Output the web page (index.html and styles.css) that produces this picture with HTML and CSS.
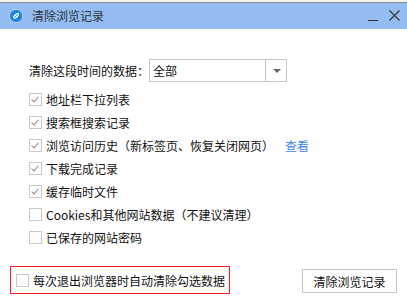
FILE: index.html
```html
<!DOCTYPE html>
<html lang="zh-CN">
<head>
<meta charset="UTF-8">
<title>清除浏览记录</title>
<link rel="stylesheet" href="styles.css">
</head>
<body>
<div class="window">
    <div class="topline"></div>
    <div class="titlebar">
        <svg class="logo" width="14" height="14" viewBox="0 0 14 14">
            <circle cx="7" cy="7" r="6.6" fill="#1c86e2"/>
            <circle cx="7" cy="7" r="6.6" fill="none" stroke="#e8f2fd" stroke-width="0.6"/>
            <path d="M4 10.2 C4 6.5 6 4 10 3.8 C10.2 7.5 8 10 4 10.2 Z" fill="#fff"/>
            <path d="M4.2 10 L9.2 4.8" stroke="#1c86e2" stroke-width="0.9"/>
        </svg>
        <span class="title">清除浏览记录</span>
        <div class="controls">
            <span class="min"></span>
            <svg class="close" width="11" height="11" viewBox="0 0 11 11">
                <path d="M0.5 0.5 L10.5 10.5 M10.5 0.5 L0.5 10.5" stroke="#333" stroke-width="1.1"/>
            </svg>
        </div>
    </div>
    <div class="content">
        <div class="range">
            <span class="label">清除这段时间的数据：</span>
            <div class="select">
                <span class="value">全部</span>
                <span class="arrow"></span>
            </div>
        </div>
        <ul class="options">
            <li><span class="box checked"></span>地址栏下拉列表</li>
            <li><span class="box checked"></span>搜索框搜索记录</li>
            <li><span class="box checked"></span>浏览访问历史（新标签页、恢复关闭网页）<a class="link">查看</a></li>
            <li><span class="box checked"></span>下载完成记录</li>
            <li><span class="box checked"></span>缓存临时文件</li>
            <li><span class="box"></span>Cookies和其他网站数据（不建议清理）</li>
            <li><span class="box"></span>已保存的网站密码</li>
        </ul>
    </div>
    <div class="footer">
        <div class="auto"><span class="box"></span>每次退出浏览器时自动清除勾选数据</div>
        <button class="clear-btn">清除浏览记录</button>
    </div>
</div>
</body>
</html>
```

FILE: styles.css
```css
body {
    margin: 0;
    font-family: "Noto Sans CJK SC", "Microsoft YaHei", sans-serif;
    font-size: 12px;
    color: #111;
    background: #fff;
}
.window {
    width: 407px;
    height: 302px;
    display: flex;
    flex-direction: column;
    overflow: hidden;
}
.topline {
    height: 2px;
    background: #f2f2f2;
    border-bottom: 1px solid #8c8c8c;
}
.titlebar {
    height: 26px;
    background: #94bcf1;
    display: flex;
    align-items: center;
    padding-left: 9px;
}
.logo {
    margin-right: 9px;
}
.title {
    color: #2e3640;
    font-size: 12px;
    line-height: 1;
}
.controls {
    margin-left: auto;
    display: flex;
    align-items: center;
    gap: 11px;
    padding-right: 7px;
}
.min {
    width: 10px;
    height: 1px;
    background: #333;
    margin-top: 9px;
}
.close {
    margin-top: -1px;
}
.content {
    padding: 30px 0 0 29px;
}
.range {
    display: flex;
    align-items: center;
    height: 23px;
}
.label {
    width: 120px;
}
.select {
    width: 136px;
    height: 21px;
    border: 1px solid #c8c8c8;
    display: flex;
    align-items: center;
}
.value {
    flex: 1;
    padding-left: 3px;
}
.arrow {
    width: 20px;
    height: 21px;
    border-left: 1px solid #c8c8c8;
    position: relative;
}
.arrow::after {
    content: "";
    position: absolute;
    left: 7px;
    top: 9px;
    border-left: 4px solid transparent;
    border-right: 4px solid transparent;
    border-top: 4px solid #666;
}
.options {
    list-style: none;
    margin: 6px 0 0;
    padding: 0;
}
.options li {
    height: 23px;
    display: flex;
    align-items: center;
}
.box {
    width: 11px;
    height: 11px;
    border: 1px solid #c9c9c9;
    background: #fff;
    margin-right: 4px;
    position: relative;
    flex-shrink: 0;
}
.box.checked::after {
    content: "";
    position: absolute;
    left: 3px;
    top: 1px;
    width: 3px;
    height: 6px;
    border-right: 1px solid #8a8a8a;
    border-bottom: 1px solid #8a8a8a;
    transform: rotate(40deg);
}
.link {
    color: #3f86e8;
    margin-left: 11px;
}
.footer {
    margin-top: auto;
    display: flex;
    align-items: center;
    padding: 0 10px 8px 10px;
}
.auto {
    height: 26px;
    border: 1px solid #f21a1a;
    display: flex;
    align-items: center;
    padding: 0 4px 0 5px;
    white-space: nowrap;
}
.clear-btn {
    margin-left: auto;
    width: 95px;
    height: 24px;
    margin-top: 2px;
    border: 1px solid #c8c8c8;
    background: #fff;
    font-family: inherit;
    font-size: 12px;
    color: #111;
    padding: 0;
}
```
